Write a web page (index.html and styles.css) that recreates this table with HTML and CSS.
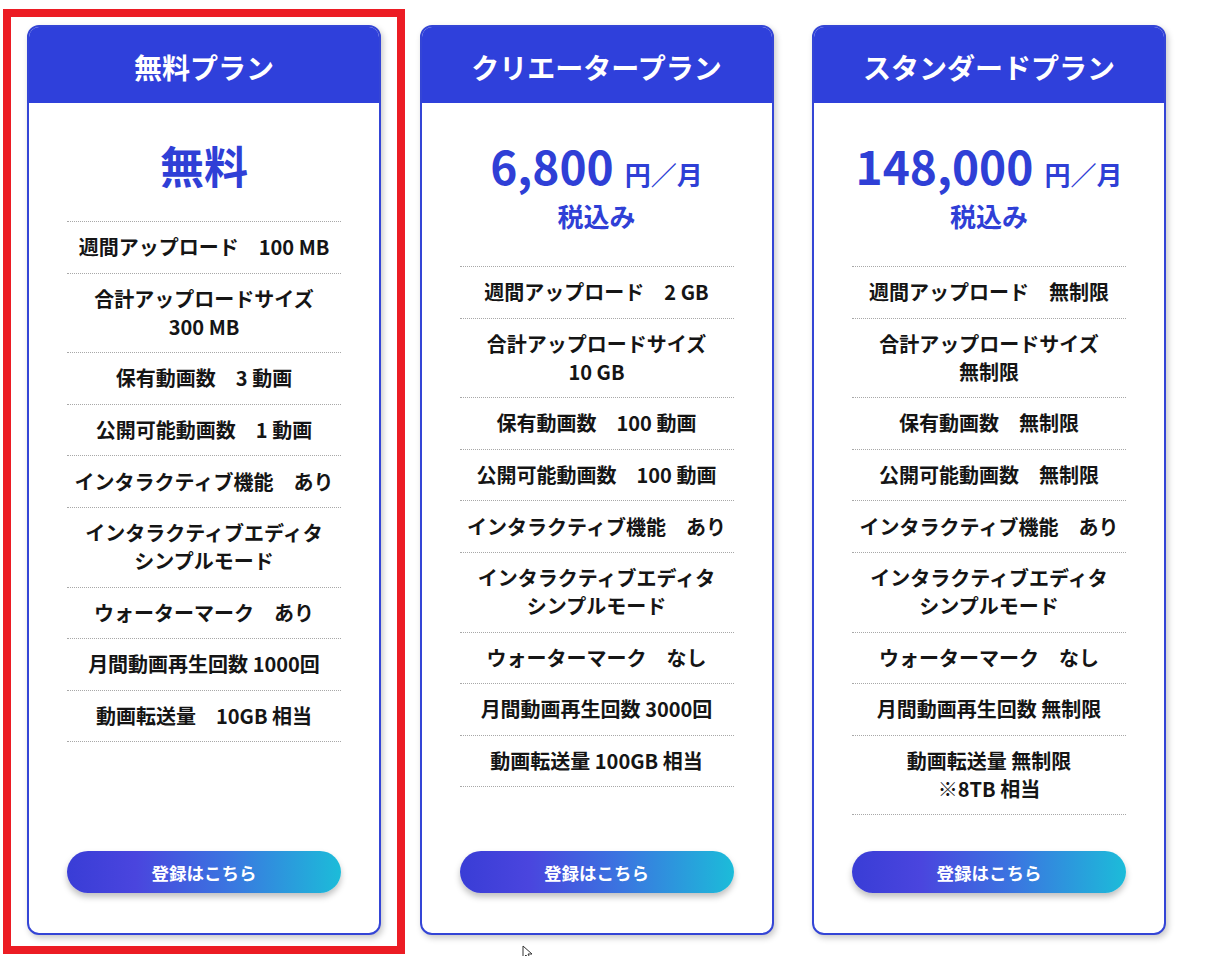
FILE: index.html
```html
<!DOCTYPE html>
<html lang="ja">
<head>
<meta charset="utf-8">
<title>料金プラン</title>
<link rel="stylesheet" href="styles.css">
</head>
<body>
<div class="plans">
  <section class="card">
    <header class="card-head">無料プラン</header>
    <div class="card-body">
      <div class="price"><div class="price-main"><span class="free">無料</span></div></div>
      <ul class="features">
        <li>週間アップロード　100 MB</li>
        <li>合計アップロードサイズ<br>300 MB</li>
        <li>保有動画数　3 動画</li>
        <li>公開可能動画数　1 動画</li>
        <li>インタラクティブ機能　あり</li>
        <li>インタラクティブエディタ<br>シンプルモード</li>
        <li>ウォーターマーク　あり</li>
        <li>月間動画再生回数 1000回</li>
        <li>動画転送量　10GB 相当</li>
      </ul>
      <a class="btn" href="#">登録はこちら</a>
    </div>
  </section>
  <section class="card">
    <header class="card-head">クリエータープラン</header>
    <div class="card-body">
      <div class="price"><div class="price-main"><span class="num">6,800</span><span class="unit">円／月</span></div><div class="tax">税込み</div></div>
      <ul class="features">
        <li>週間アップロード　2 GB</li>
        <li>合計アップロードサイズ<br>10 GB</li>
        <li>保有動画数　100 動画</li>
        <li>公開可能動画数　100 動画</li>
        <li>インタラクティブ機能　あり</li>
        <li>インタラクティブエディタ<br>シンプルモード</li>
        <li>ウォーターマーク　なし</li>
        <li>月間動画再生回数 3000回</li>
        <li>動画転送量 100GB 相当</li>
      </ul>
      <a class="btn" href="#">登録はこちら</a>
    </div>
  </section>
  <section class="card">
    <header class="card-head">スタンダードプラン</header>
    <div class="card-body">
      <div class="price"><div class="price-main"><span class="num">148,000</span><span class="unit">円／月</span></div><div class="tax">税込み</div></div>
      <ul class="features">
        <li>週間アップロード　無制限</li>
        <li>合計アップロードサイズ<br>無制限</li>
        <li>保有動画数　無制限</li>
        <li>公開可能動画数　無制限</li>
        <li>インタラクティブ機能　あり</li>
        <li>インタラクティブエディタ<br>シンプルモード</li>
        <li>ウォーターマーク　なし</li>
        <li>月間動画再生回数 無制限</li>
        <li>動画転送量 無制限<br>※8TB 相当</li>
      </ul>
      <a class="btn" href="#">登録はこちら</a>
    </div>
  </section>
</div>
<div class="highlight"></div>
<svg class="cursor" width="12" height="16" viewBox="0 0 12 16"><path d="M1 1 L1 13 L4 10 L6.5 15 L8.5 14 L6 9 L10 9 Z" fill="#fff" stroke="#333" stroke-width="1"/></svg>
</body>
</html>
```
FILE: styles.css
```css
html, body {
  margin: 0;
  padding: 0;
  background: #fff;
}
body {
  font-family: "Noto Sans CJK JP", "Noto Sans", sans-serif;
  position: relative;
  width: 1208px;
  height: 956px;
  overflow: hidden;
}
.plans {
  display: flex;
  align-items: stretch;
  gap: 38.5px;
  padding: 25px 0 0 27px;
}
.card {
  width: 354px;
  box-sizing: border-box;
  border: 2px solid #3445d6;
  border-radius: 12px;
  overflow: hidden;
  background: #fff;
  display: flex;
  flex-direction: column;
  box-shadow: 2px 3px 6px rgba(0, 0, 0, 0.22);
}
.card-head {
  height: 76px;
  background: #2f40db;
  color: #fff;
  font-weight: 700;
  font-size: 28px;
  display: flex;
  align-items: center;
  justify-content: center;
  padding-top: 3px;
  box-sizing: border-box;
}
.card-body {
  flex: 1;
  display: flex;
  flex-direction: column;
  padding: 0 38px 40px;
}
.price {
  padding: 34px 0 28px;
  text-align: center;
  color: #2f3fd6;
  font-weight: 700;
}
.price-main {
  height: 56px;
  line-height: 56px;
  white-space: nowrap;
}
.free {
  font-size: 44px;
}
.num {
  font-size: 46px;
}
.unit {
  font-size: 26px;
  margin-left: 11px;
}
.tax {
  height: 45px;
  line-height: 45px;
  font-size: 26px;
}
.features {
  list-style: none;
  margin: 0 0 36px;
  padding: 0;
  border-top: 1px dotted #a8a8a8;
}
.features li {
  border-bottom: 1px dotted #a8a8a8;
  padding: 11.3px 0;
  line-height: 28px;
  font-size: 20px;
  font-weight: 700;
  color: #151515;
  text-align: center;
}
.btn {
  margin-top: auto;
  display: flex;
  align-items: center;
  justify-content: center;
  height: 42px;
  border-radius: 21px;
  background: linear-gradient(90deg, #393dd6 0%, #4a45de 25%, #3a77e0 60%, #1cbcd9 100%);
  color: #fff;
  font-size: 17.5px;
  font-weight: 700;
  text-decoration: none;
  box-shadow: 0 4px 6px rgba(0, 0, 0, 0.25);
}
.highlight {
  position: absolute;
  left: 3px;
  top: 9px;
  width: 402px;
  height: 945px;
  box-sizing: border-box;
  border: 8px solid #ec1c24;
  pointer-events: none;
}
.cursor {
  position: absolute;
  left: 522px;
  top: 945px;
}
```
